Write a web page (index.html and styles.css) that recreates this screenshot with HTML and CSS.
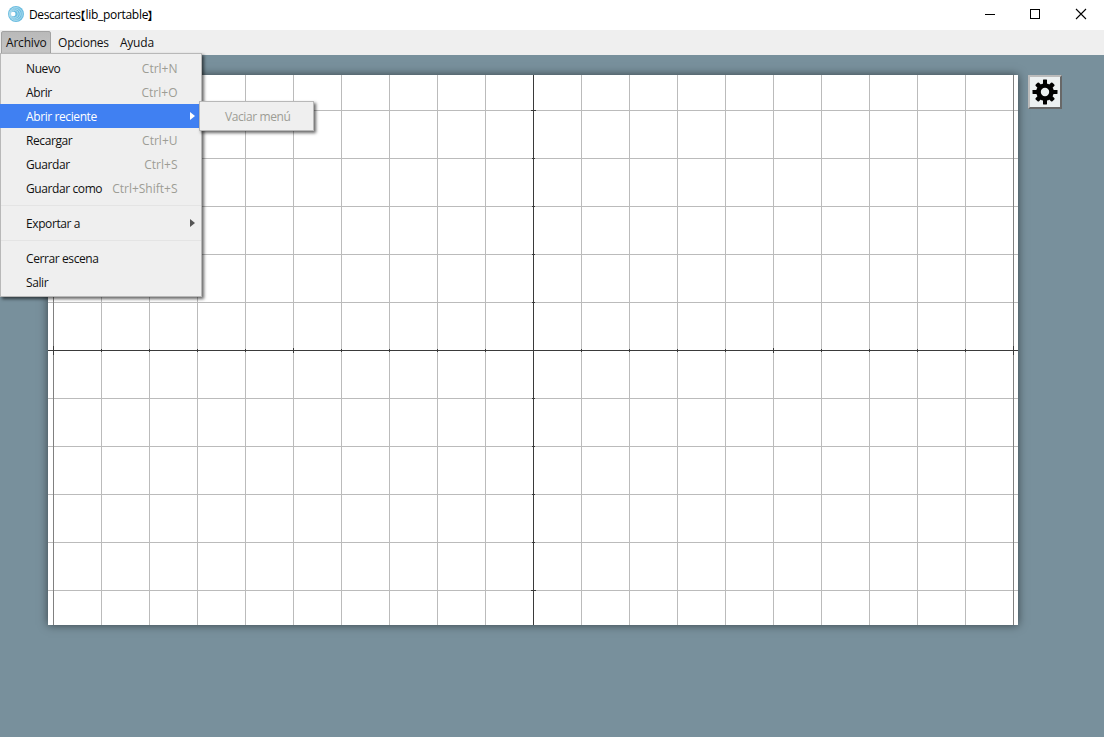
FILE: index.html
```html
<!DOCTYPE html>
<html lang="es">
<head>
<meta charset="utf-8">
<title>Descartes</title>
<link rel="stylesheet" href="styles.css">
</head>
<body>
<header class="titlebar">
  <svg class="logo" width="16" height="16" viewBox="0 0 16 16">
    <circle cx="8" cy="8" r="8" fill="#6bbde0"/>
    <g fill="none" stroke="#c3e5f2" stroke-width=".7"><circle cx="7.8" cy="8" r="6.5"/><circle cx="7.2" cy="8" r="5.100"/><circle cx="6.500" cy="8" r="3.700"/></g>
    <circle cx="5.200" cy="8" r="2.300" fill="#fff"/>
  </svg>
  <h1 class="title"><span class="name">Descartes</span><span class="bracket">【</span><span class="doc">lib_portable</span><span class="bracket">】</span></h1>
  <div class="controls">
    <svg width="12" height="12" shape-rendering="crispEdges"><path d="M2 6.5h10" stroke="#000"/></svg>
    <svg width="12" height="12" shape-rendering="crispEdges"><rect x="1.5" y="1.5" width="9" height="9" fill="none" stroke="#000"/></svg>
    <svg width="12" height="12"><path d="M1 1l10 10M11 1L1 11" stroke="#000" stroke-width="1.1"/></svg>
  </div>
</header>
<nav class="menubar">
  <div class="tab active"><span>Archivo</span></div>
  <div class="tab"><span>Opciones</span></div>
  <div class="tab"><span>Ayuda</span></div>
</nav>
<main class="workspace">
  <svg class="plane" width="970" height="550" shape-rendering="crispEdges" fill="none">
    <path stroke="#bbb" d="M53.5 0v550M101.5 0v550M149.5 0v550M197.5 0v550M245.5 0v550M293.5 0v550M341.5 0v550M389.5 0v550M437.5 0v550M533.5 0v550M581.5 0v550M629.5 0v550M677.5 0v550M725.5 0v550M773.5 0v550M821.5 0v550M869.5 0v550M917.5 0v550"/>
    <path stroke="#bbb" d="M0 35.500h970M0 83.500h970M0 131.500h970M0 179.500h970M0 227.500h970M0 323.500h970M0 371.500h970M0 419.500h970M0 467.500h970M0 515.500h970"/>
    <path stroke="#808080" d="M5.500 0v550M965.500 0v550"/>
    <path stroke="#3a3a3a" d="M0 275.500h970M485.500 0v550"/>
    <path stroke="#3a3a3a" d="M53.500 274v3M101.500 274v3M149.500 274v3M197.500 274v3M293.500 274v3M341.500 274v3M389.500 274v3M437.500 274v3M533.500 274v3M581.500 274v3M629.500 274v3M677.500 274v3M773.500 274v3M821.500 274v3M869.500 274v3M917.500 274v3M245.500 273v5M725.500 273v5M5.500 271v9M965.500 271v9"/>
    <path stroke="#3a3a3a" d="M484 83.500h3M484 131.500h3M484 179.500h3M484 227.500h3M484 323.500h3M484 371.500h3M484 419.500h3M484 467.500h3M483 35.500h5M483 515.500h5"/>
  </svg>
  <button class="gear" aria-label="Configurar">
    <svg width="26" height="26" viewBox="-13 -13 26 26">
      <g fill="#000"><rect x="-2" y="-12.500" width="4" height="25" rx=".4"/><rect x="-2" y="-12.500" width="4" height="25" rx=".4" transform="rotate(90)"/><rect x="-2.300" y="-11.800" width="4.600" height="23.600" rx="1" transform="rotate(45)"/><rect x="-2.300" y="-11.800" width="4.600" height="23.600" rx="1" transform="rotate(-45)"/></g>
      <circle r="6.500" fill="#ecf0f1" stroke="#000" stroke-width="4.600"/>
    </svg>
  </button>
</main>
<div class="menu">
  <div class="item"><span>Nuevo</span><kbd>Ctrl+N</kbd></div>
  <div class="item"><span>Abrir</span><kbd>Ctrl+O</kbd></div>
  <div class="item selected"><span>Abrir reciente</span><i class="arrow"></i></div>
  <div class="item"><span>Recargar</span><kbd>Ctrl+U</kbd></div>
  <div class="item"><span>Guardar</span><kbd>Ctrl+S</kbd></div>
  <div class="item"><span>Guardar como</span><kbd>Ctrl+Shift+S</kbd></div>
  <div class="separator"></div>
  <div class="item"><span>Exportar a</span><i class="arrow"></i></div>
  <div class="separator"></div>
  <div class="item"><span>Cerrar escena</span></div>
  <div class="item"><span>Salir</span></div>
</div>
<div class="submenu"><span>Vaciar menú</span></div>
</body>
</html>
```
FILE: styles.css
```css
* { box-sizing: border-box; }
body {
  margin: 0;
  height: 737px;
  display: flex;
  flex-direction: column;
  overflow: hidden;
  font: 12px/16px "Open Sans", "Noto Sans", sans-serif;
  letter-spacing: -0.4px;
  color: #111;
  background: #78909c;
}
svg { display: block; }
.titlebar {
  height: 30px;
  flex: none;
  display: flex;
  align-items: center;
  padding: 0 17px 2px 8px;
  background: #fff;
}
.title {
  display: flex;
  margin: 2px 0 0 5px;
  font-size: 12px;
  font-weight: 400;
  color: #000;
}
.name { width: 51px; }
.doc { width: 62px; letter-spacing: -0.3px; }
.bracket {
  width: 5.5px;
  letter-spacing: 0;
  font-family: "Noto Sans CJK SC", sans-serif;
  font-feature-settings: "halt";
  font-weight: 700;
  font-size: 11px;
}
.controls { margin-left: auto; display: flex; gap: 34px; }
.menubar {
  height: 25px;
  flex: none;
  display: flex;
  padding: 1px 0 0 1px;
  letter-spacing: -0.2px;
  background: #efefef;
}
.tab {
  height: 24px;
  padding: 4px 4px 4px 7px;
}
.tab.active {
  width: 50px;
  padding: 3px 4px;
  border: 1px solid #a2a2a2;
  border-radius: 2px;
  background: linear-gradient(#b9b9b9, #c6c6c6);
}
.workspace {
  flex: 1;
  display: flex;
  align-items: flex-start;
  gap: 10px;
  padding: 20px 0 0 48px;
}
.plane {
  flex: none;
  background: #fff;
  box-shadow: 0 0 9px rgba(0, 0, 0, .55);
}
.gear {
  width: 34px;
  height: 34px;
  padding: 0;
  display: grid;
  place-items: center;
  border: 2px solid;
  border-color: #bbb #686868 #686868 #bbb;
  background: #ecf0f1;
}
.menu {
  position: absolute;
  left: 0;
  top: 53px;
  width: 202px;
  height: 244px;
  padding: 2px 0;
  border: 1px solid #b8b8b8;
  background: #efefef;
  box-shadow: 2px 2px 3px rgba(0, 0, 0, .6);
}
.item {
  height: 24px;
  display: flex;
  align-items: center;
  justify-content: space-between;
  padding: 1px 23.5px 0 25px;
}
.item:has(.arrow) { padding-right: 6px; }
kbd { font: inherit; letter-spacing: 0; color: #9d9d95; }
.selected {
  margin-left: -1px;
  padding-left: 26px;
  background: #4080f2;
  color: #fff;
}
.arrow {
  margin-top: -2px;
  border: solid transparent;
  border-width: 4px 0 4px 5px;
  border-left-color: #555;
}
.selected .arrow { border-left-color: #fff; }
.separator {
  height: 1px;
  margin: 5px 0;
  background: #e4e4e4;
}
.submenu {
  position: absolute;
  left: 199px;
  top: 101px;
  width: 115px;
  height: 30px;
  padding: 7px 0 0 25px;
  border: 1px solid #b8b8b8;
  background: #efefef;
  color: #9d9d95;
  box-shadow: 2px 2px 3px rgba(0, 0, 0, .6);
}
```
